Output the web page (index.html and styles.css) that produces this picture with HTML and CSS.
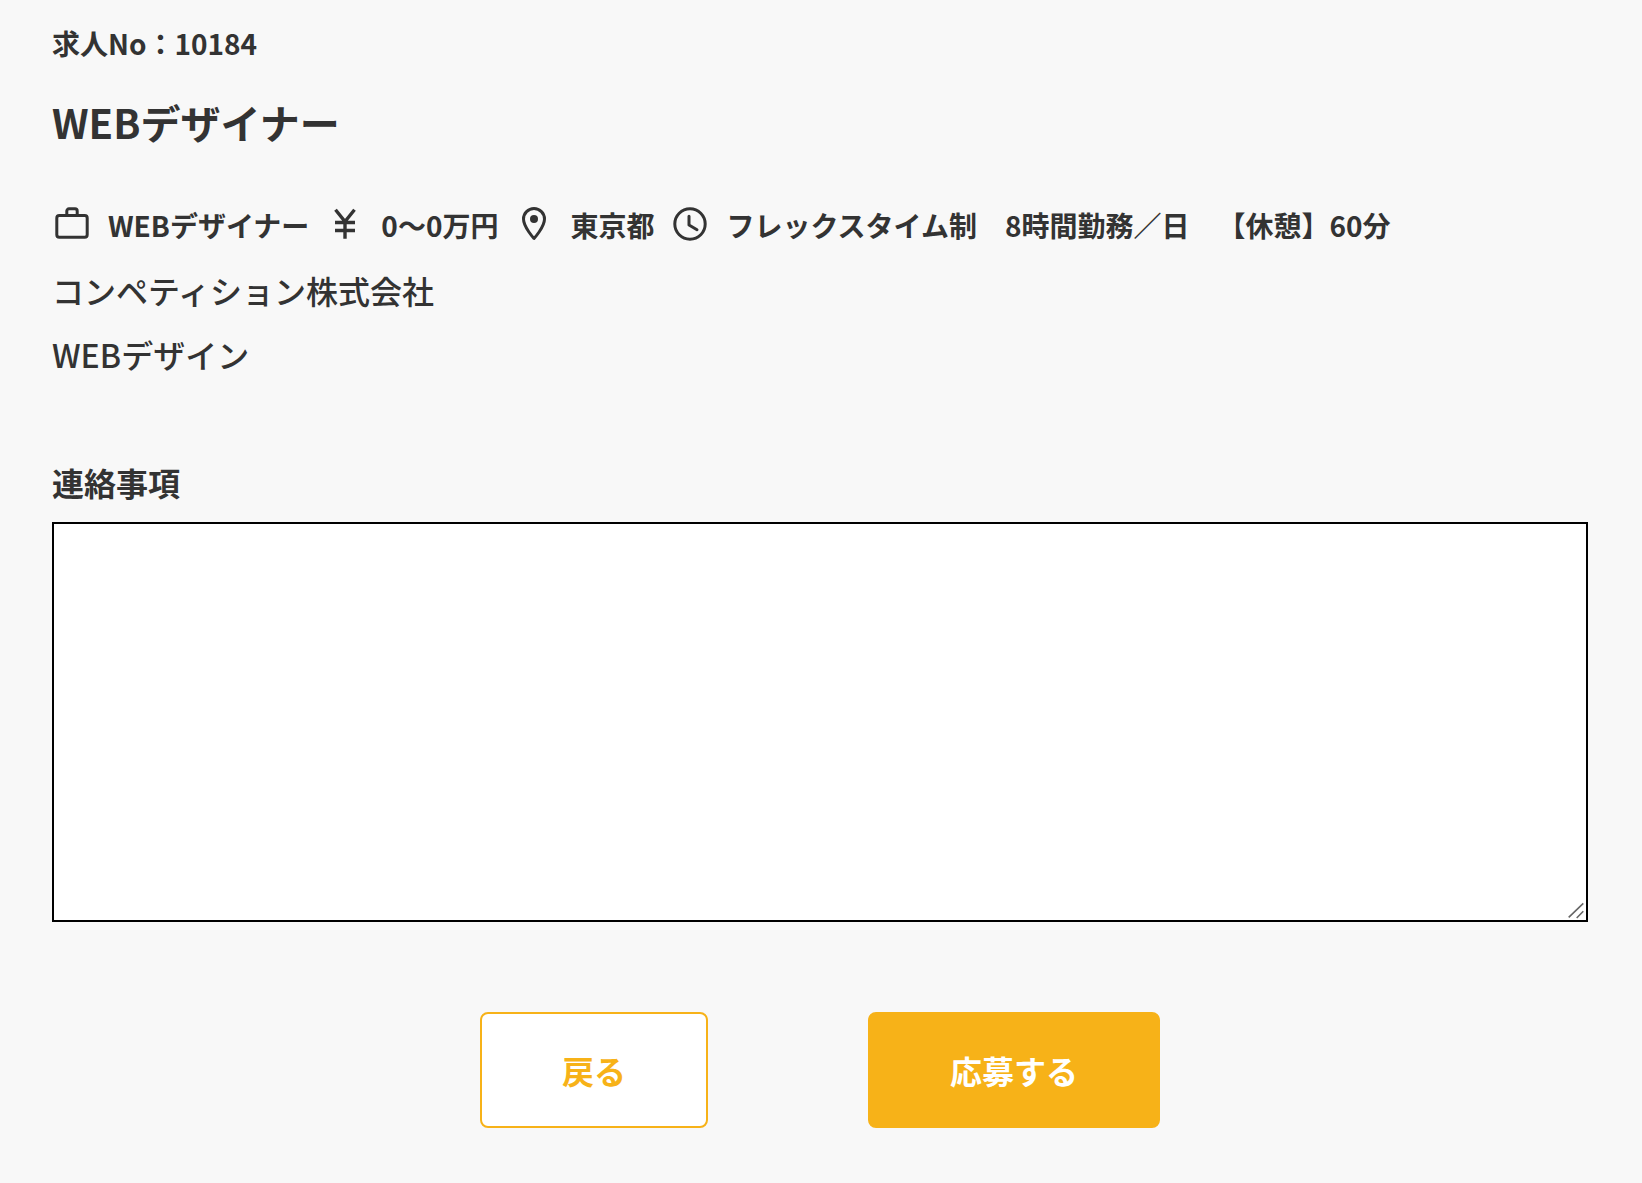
FILE: index.html
```html
<!DOCTYPE html>
<html lang="ja">
<head>
<meta charset="utf-8">
<title>求人応募</title>
<link rel="stylesheet" href="styles.css">
</head>
<body>
<main class="page">
  <p class="job-no">求人No：10184</p>
  <h1 class="job-title">WEBデザイナー</h1>
  <ul class="meta">
    <li class="meta-item">
      <svg class="icon" viewBox="0 0 40 40" aria-hidden="true"><rect x="4.800" y="10.500" width="30.400" height="21.700" rx="2.500"/><path d="M14.800 10.500V6a2.200 2.200 0 0 1 2.200-2.200h6a2.200 2.200 0 0 1 2.200 2.200v4.500"/></svg>
      <span>WEBデザイナー</span>
    </li>
    <li class="meta-item">
      <svg class="icon" viewBox="0 0 40 40" aria-hidden="true"><path class="butt" d="M10.500 4.700L20 16.500L29.500 4.700M20 16.500V33.700M10 17.500H30M10 25.500H30"/></svg>
      <span>0〜0万円</span>
    </li>
    <li class="meta-item">
      <svg class="icon" viewBox="0 0 40 40" aria-hidden="true"><path d="M20 33.500C20 33.500 9.500 22 9.500 14a10.500 10.500 0 0 1 21 0C30.500 22 20 33.500 20 33.500Z"/><circle class="dot" cx="20" cy="14" r="4"/></svg>
      <span>東京都</span>
    </li>
    <li class="meta-item">
      <svg class="icon" viewBox="0 0 40 40" aria-hidden="true"><circle cx="20" cy="19" r="15.200"/><path d="M19 11.300V20L27 24.700"/></svg>
      <span>フレックスタイム制　8時間勤務／日　<span class="break-time">【休憩】60分</span></span>
    </li>
  </ul>
  <p class="line">コンペティション株式会社</p>
  <p class="line">WEBデザイン</p>
  <label class="field-label" for="notes">連絡事項</label>
  <div class="notes-wrap">
    <textarea class="notes" id="notes"></textarea>
    <svg class="resizer" viewBox="0 0 20 20" aria-hidden="true"><path d="M2.700 17.300L17.300 3.300M10.700 18L17.300 11.300"/></svg>
  </div>
  <div class="actions">
    <a class="btn btn-back" href="#">戻る</a>
    <a class="btn btn-apply" href="#">応募する</a>
  </div>
</main>
</body>
</html>
```

FILE: styles.css
```css
* { box-sizing: border-box; }
html, body { margin: 0; padding: 0; }
body {
  background: #f8f8f8;
  color: #333;
  font-family: "Noto Sans CJK JP", "Noto Sans", sans-serif;
}
.page {
  height: 1183px;
  padding: 23px 54px 0 52px;
  overflow: hidden;
}
.job-no {
  margin: 0;
  font-size: 28px;
  line-height: 40px;
  font-weight: 700;
}
.job-title {
  margin: 30px 0 0;
  font-size: 40px;
  line-height: 58px;
  font-weight: 700;
}
.meta {
  display: flex;
  gap: 16px;
  list-style: none;
  margin: 54px 0 0;
  padding: 0 0 5px;
}
.meta-item {
  display: flex;
  align-items: center;
  gap: 16px;
  font-size: 28px;
  line-height: 40px;
  font-weight: 700;
}
.break-time { margin-left: 14px; }
.icon {
  width: 40px;
  height: 40px;
  flex: none;
  fill: none;
  stroke: #333;
  stroke-width: 3;
  stroke-linecap: round;
  stroke-linejoin: round;
}
.icon .butt { stroke-linecap: butt; stroke-linejoin: miter; stroke-width: 3.400; }
.icon .dot { fill: #333; stroke: none; }
.line {
  margin: 16px 0 0;
  font-size: 32px;
  line-height: 48px;
  font-weight: 500;
}
.field-label {
  display: block;
  margin-top: 81px;
  font-size: 32px;
  line-height: 46px;
  font-weight: 700;
}
.notes-wrap {
  position: relative;
  margin-top: 17px;
}
.notes {
  display: block;
  width: 100%;
  height: 400px;
  margin: 0;
  background: #fff;
  border: 2px solid #000;
  border-radius: 0;
  resize: none;
}
.resizer {
  position: absolute;
  right: 2px;
  bottom: 2px;
  width: 20px;
  height: 20px;
  fill: none;
  stroke: #666;
  stroke-width: 1.600;
  pointer-events: none;
}
.actions {
  display: flex;
  justify-content: center;
  gap: 160px;
  margin-top: 90px;
}
.btn {
  display: flex;
  align-items: center;
  justify-content: center;
  height: 116px;
  border-radius: 8px;
  border: 2px solid #f7b218;
  font-size: 32px;
  line-height: 46px;
  font-weight: 700;
  text-decoration: none;
}
.btn-back { width: 228px; background: #fff; color: #f7b218; }
.btn-apply { width: 292px; background: #f7b218; color: #fff; }
```
